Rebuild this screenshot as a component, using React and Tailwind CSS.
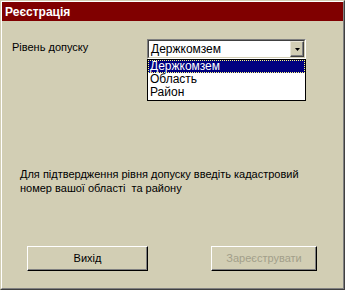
export default function App() {
  const font = { fontFamily: '"Liberation Sans", Arial, sans-serif' };
  return (
    <div className="w-[345px] h-[290px] bg-[#d2ceb4] border border-t-[#d2ceb4] border-l-[#d2ceb4] border-r-[#404040] border-b-[#404040]" style={font}>
      <div className="w-full h-full border border-t-white border-l-white border-r-[#808080] border-b-[#808080] flex flex-col">
        <div className="h-[19px] bg-[#800000] flex items-center pl-[3px] text-white font-bold text-[12px] leading-none">
          Реєстрація
        </div>
        <div className="flex flex-col pl-[10px]">
          <div className="flex mt-[18px]">
            <div className="w-[135px] text-[11px] leading-[14px] pt-[1px] text-black">Рівень допуску</div>
            <div className="relative w-[159px] h-[20px] border border-t-[#808080] border-l-[#808080] border-r-white border-b-white">
              <div className="w-full h-full border border-t-[#404040] border-l-[#404040] border-r-[#d2ceb4] border-b-[#d2ceb4] bg-white flex">
                <div className="flex-1 text-[12px] leading-[16px] pl-[2px] text-black">Держкомзем</div>
                <div className="w-[14px] h-full bg-[#d2ceb4] border border-t-[#e8e6d8] border-l-[#e8e6d8] border-r-[#404040] border-b-[#404040] shadow-[inset_-1px_-1px_0_#808080] flex items-center justify-center">
                  <svg width="5" height="3" viewBox="0 0 5 3">
                    <path d="M0 0H5L2.5 3Z" fill="#000" />
                  </svg>
                </div>
              </div>
              <div className="absolute left-[-1px] top-[19px] w-[159px] h-[42px] bg-white border border-black text-[12px] leading-[13px] text-black">
                <div className="bg-[#000080] text-white h-[13px] pl-[2px] outline outline-1 outline-dotted outline-[#ffff80] -outline-offset-1">Держкомзем</div>
                <div className="h-[13px] pl-[2px]">Область</div>
                <div className="h-[13px] pl-[2px]">Район</div>
              </div>
            </div>
          </div>
          <div className="mt-[108px] pl-[8px] text-[11px] leading-[14px] text-black">
            <div>Для підтвердження рівня допуску введіть кадастровий</div>
            <div className="whitespace-pre">номер вашої області  та району</div>
          </div>
          <div className="flex mt-[51px]">
            <div className="ml-[15px] w-[121px] h-[25px] border border-t-white border-l-white border-r-black border-b-black shadow-[inset_-1px_-1px_0_#808080] flex items-center justify-center text-[11px] text-black">
              Вихід
            </div>
            <div className="ml-[63px] w-[106px] h-[25px] border border-t-white border-l-white border-r-black border-b-black shadow-[inset_-1px_-1px_0_#808080] flex items-center justify-center text-[11px] text-[#a29f8a]">
              Зареєструвати
            </div>
          </div>
        </div>
      </div>
    </div>
  );
}
